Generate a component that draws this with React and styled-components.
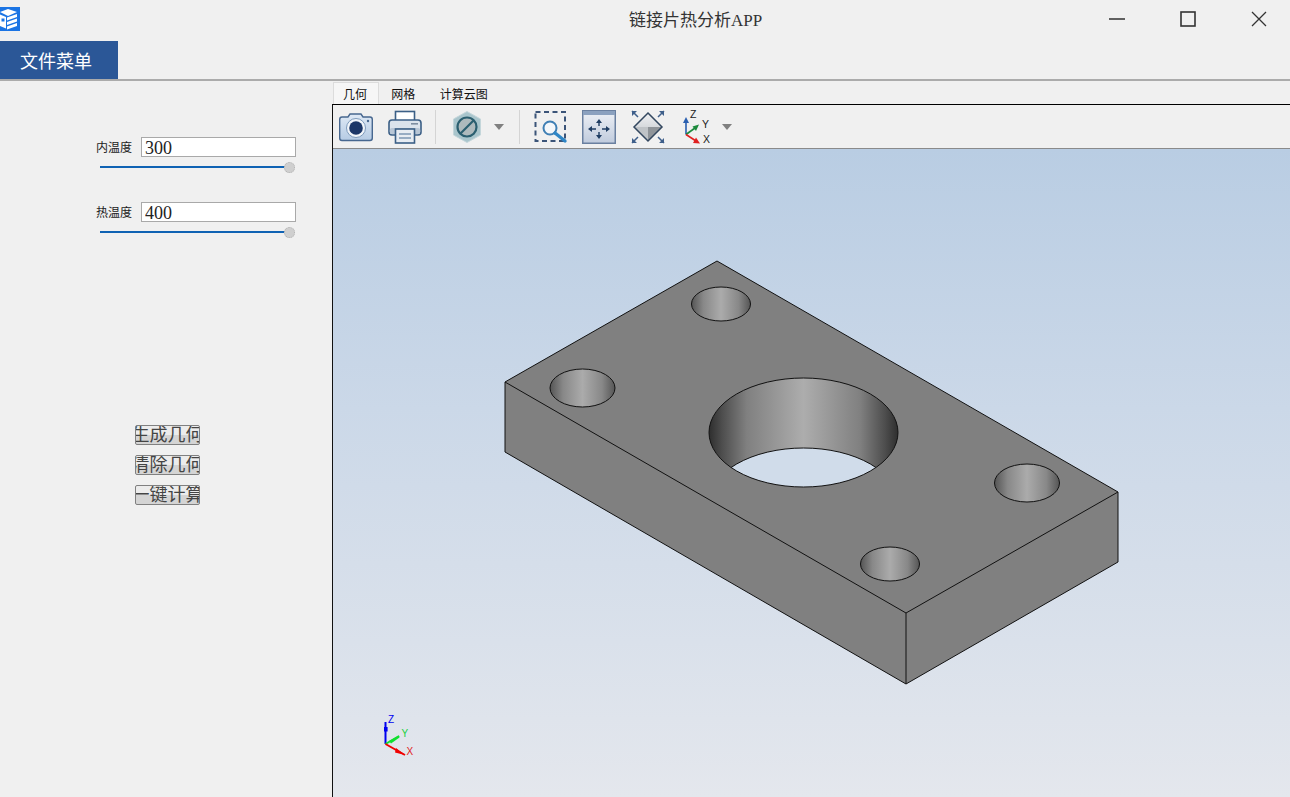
import React from "react";
import styled, { createGlobalStyle } from "styled-components";

const SERIF = `"Liberation Serif", "Noto Sans CJK SC", serif`;
const SANS = `"Liberation Sans", "Noto Sans CJK SC", sans-serif`;

const GlobalStyle = createGlobalStyle`
  html, body {
    margin: 0;
    height: 100%;
    overflow: hidden;
    background: #f0f0f0;
  }
  #root {
    height: 100%;
  }
`;

function AppIcon() {
  return (
    <svg width="20" height="24" viewBox="0 0 20 24">
      <rect width="20" height="24" fill="#1b74e4" />
      <path d="M0 5 L8 2 L17 5 L8 9 Z" fill="#fff" />
      <path d="M7 10.500 L17 7 V10 L7 13.500 Z M7 15 L17 11.500 V14.500 L7 18 Z M7 19.500 L17 16 V19 L7 22.500 Z" fill="#fff" />
      <path d="M0 7.500 L6 10 V21.500 L0 19 Z" fill="#fff" />
      <rect x="1.500" y="11.500" width="3" height="3" fill="#1b74e4" />
    </svg>
  );
}

function CameraIcon() {
  return (
    <svg width="34" height="30" viewBox="0 0 34 30">
      <defs>
        <linearGradient id="camBody" x1="0" y1="0" x2="0" y2="1">
          <stop offset="0" stopColor="#dfe9f5" />
          <stop offset="1" stopColor="#b5cbe4" />
        </linearGradient>
      </defs>
      <path
        d="M3 5 H9 L11 2 H22 L24 5 H31 Q33.300 5 33.300 7.500 V26 Q33.300 28.500 31 28.500 H3 Q0.700 28.500 0.700 26 V7.500 Q0.700 5 3 5 Z"
        fill="url(#camBody)"
        stroke="#47678f"
        strokeWidth="1.400"
      />
      <circle cx="17" cy="16" r="9.500" fill="#f1f5fa" stroke="#7d9abb" />
      <circle cx="17" cy="16" r="6.800" fill="#1c3768" />
      <circle cx="29" cy="9" r="1.200" fill="#47678f" />
    </svg>
  );
}

function PrinterIcon() {
  return (
    <svg width="34" height="34" viewBox="0 0 34 34">
      <rect x="7.500" y="1.500" width="19" height="10" fill="#fff" stroke="#3b5f86" strokeWidth="1.600" />
      <rect x="1" y="10" width="32" height="15" rx="3" fill="#dbe3ec" stroke="#3b5f86" strokeWidth="1.600" />
      <rect x="1.800" y="18" width="30.400" height="6" rx="2" fill="#b8c6d6" />
      <rect x="23" y="13" width="7" height="1.600" fill="#7d8da0" />
      <rect x="7.500" y="19" width="19" height="14" fill="#e7ecf2" stroke="#3b5f86" strokeWidth="1.600" />
      <path d="M11 24 H23 M11 28 H23" stroke="#7d97b4" strokeWidth="1.500" />
    </svg>
  );
}

function HexIcon() {
  return (
    <svg width="30" height="32" viewBox="0 0 30 32">
      <path d="M14 0.500 L27.500 8 V24 L14 31.500 L0.500 24 V8 Z" fill="#a9c5cc" stroke="#c4d6da" />
      <circle cx="14" cy="16" r="9.500" fill="#aebabd" stroke="#2b5f70" strokeWidth="2.200" />
      <path d="M7.500 22.500 L20.500 9.500" stroke="#2b5f70" strokeWidth="2.200" />
    </svg>
  );
}

function ZoomBoxIcon() {
  return (
    <svg width="34" height="34" viewBox="0 0 34 34">
      <rect x="1.500" y="2" width="29.500" height="29" fill="none" stroke="#3b5478" strokeWidth="2" strokeDasharray="5 3.500" />
      <circle cx="16" cy="18" r="6.500" fill="#f4f7fa" stroke="#3f7fb4" strokeWidth="2" />
      <path d="M21 23 L31 31" stroke="#2f86c6" strokeWidth="3.400" strokeLinecap="round" />
    </svg>
  );
}

function PanIcon() {
  return (
    <svg width="34" height="34" viewBox="0 0 34 34">
      <defs>
        <linearGradient id="panBg" x1="0" y1="0" x2="0" y2="1">
          <stop offset="0" stopColor="#eef1f6" />
          <stop offset="1" stopColor="#c0cbdd" />
        </linearGradient>
      </defs>
      <rect x="0.750" y="0.750" width="32.500" height="32.500" fill="url(#panBg)" stroke="#6a80a0" strokeWidth="1.500" />
      <rect x="1" y="1" width="32" height="4" fill="#8ba1bf" />
      <path d="M17 12 V16 M17 22 V26 M9 19 H14 M20 19 H25" stroke="#1f3d63" strokeWidth="1.400" />
      <path d="M17 9 L20 13 H14 Z M17 29 L20 25 H14 Z M6 19 L10 16 V22 Z M28 19 L24 16 V22 Z" fill="#1f3d63" />
    </svg>
  );
}

function FitIcon() {
  return (
    <svg width="34" height="34" viewBox="0 0 34 34">
      <defs>
        <linearGradient id="fitTop" x1="0" y1="0" x2="0" y2="1">
          <stop offset="0" stopColor="#f0f1f3" />
          <stop offset="1" stopColor="#d6d9dd" />
        </linearGradient>
      </defs>
      <path d="M17 3 L31 17 H3 Z" fill="url(#fitTop)" />
      <path d="M17 31 L31 17 L17 17 Z" fill="#8f9499" />
      <path d="M17 31 L3 17 L17 17 Z" fill="#bfc3c7" />
      <path d="M17 3 L31 17 L17 31 L3 17 Z" fill="none" stroke="#33475f" strokeWidth="1.500" />
      <path d="M1 1 L7 7 M33 1 L27 7 M1 33 L7 27 M33 33 L27 27" stroke="#3f5f8a" strokeWidth="1.500" />
      <path d="M1 1 H6 L1 6 Z M33 1 H28 L33 6 Z M1 33 H6 L1 28 Z M33 33 H28 L33 28 Z" fill="#3f5f8a" />
    </svg>
  );
}

function AxesIcon() {
  return (
    <svg width="30" height="36" viewBox="0 0 30 36">
      <path d="M3 25.500 V12" stroke="#2a5fb0" strokeWidth="1.600" />
      <path d="M3 8 L6 14 H0 Z" fill="#2a5fb0" />
      <path d="M3 25.500 L12 19" stroke="#1c8a3c" strokeWidth="1.600" />
      <path d="M16 15.500 L13 22 L9.500 17.500 Z" fill="#1c8a3c" />
      <path d="M3 25.500 L13 32" stroke="#e02020" strokeWidth="1.600" />
      <path d="M17 34.500 L10 34 L13 28.500 Z" fill="#e02020" />
      <AxisText x="7" y="8.500">Z</AxisText>
      <AxisText x="19" y="18.500">Y</AxisText>
      <AxisText x="20" y="33.500">X</AxisText>
    </svg>
  );
}

export default function App() {
  return (
    <Page>
      <GlobalStyle />
      <TitleBar>
        <AppIcon />
        <Title>链接片热分析APP</Title>
        <WindowControls>
          <WindowButton>
            <svg width="16" height="16" viewBox="0 0 16 16">
              <path d="M0 8 H16" stroke="#222" strokeWidth="1.400" />
            </svg>
          </WindowButton>
          <WindowButton>
            <svg width="16" height="16" viewBox="0 0 16 16">
              <rect x="1" y="1" width="14" height="14" fill="none" stroke="#333" strokeWidth="1.600" />
            </svg>
          </WindowButton>
          <WindowButton>
            <svg width="16" height="16" viewBox="0 0 16 16">
              <path d="M1 1 L15 15 M15 1 L1 15" stroke="#333" strokeWidth="1.300" />
            </svg>
          </WindowButton>
        </WindowControls>
      </TitleBar>

      <MenuBar>
        <MenuButton>文件菜单</MenuButton>
      </MenuBar>

      <Workspace>
        <SidePanel>
          <ParamGroup>
            <FieldRow>
              <FieldLabel>内温度</FieldLabel>
              <FieldInput defaultValue="300" readOnly />
            </FieldRow>
            <Slider>
              <SliderThumb />
            </Slider>
          </ParamGroup>
          <ParamGroup>
            <FieldRow>
              <FieldLabel>热温度</FieldLabel>
              <FieldInput defaultValue="400" readOnly />
            </FieldRow>
            <Slider>
              <SliderThumb />
            </Slider>
          </ParamGroup>
          <ActionList>
            <ActionButton>生成几何</ActionButton>
            <ActionButton>清除几何</ActionButton>
            <ActionButton>一键计算</ActionButton>
          </ActionList>
        </SidePanel>

        <ViewerPane>
          <TabBar>
            <Tab $active>几何</Tab>
            <Tab>网格</Tab>
            <Tab>计算云图</Tab>
          </TabBar>
          <ViewerBody>
            <Toolbar>
              <ToolIcon $left={6}><CameraIcon /></ToolIcon>
              <ToolIcon $left={15}><PrinterIcon /></ToolIcon>
              <ToolSeparator $left={13} />
              <ToolIcon $left={17}><HexIcon /></ToolIcon>
              <Caret $left={11} />
              <ToolSeparator $left={15} />
              <ToolIcon $left={14}><ZoomBoxIcon /></ToolIcon>
              <ToolIcon $left={14}><PanIcon /></ToolIcon>
              <ToolIcon $left={15}><FitIcon /></ToolIcon>
              <ToolIcon $left={18}><AxesIcon /></ToolIcon>
              <Caret $left={9} />
            </Toolbar>
            <Viewport>
              <Scene />
            </Viewport>
          </ViewerBody>
        </ViewerPane>
      </Workspace>
    </Page>
  );
}

function Scene() {
  return (
    <SceneSvg viewBox="333 149 957 648">
      <defs>
        <linearGradient id="bigHole" x1="0" y1="0" x2="1" y2="0">
          <stop offset="0" stopColor="#2e2e2e" />
          <stop offset="0.07" stopColor="#4e4e4e" />
          <stop offset="0.2" stopColor="#808080" />
          <stop offset="0.5" stopColor="#adadad" />
          <stop offset="0.8" stopColor="#808080" />
          <stop offset="0.93" stopColor="#4e4e4e" />
          <stop offset="1" stopColor="#2e2e2e" />
        </linearGradient>
        <linearGradient id="smallHole" x1="0" y1="0" x2="1" y2="0">
          <stop offset="0" stopColor="#555" />
          <stop offset="0.2" stopColor="#888" />
          <stop offset="0.5" stopColor="#ababab" />
          <stop offset="0.8" stopColor="#888" />
          <stop offset="1" stopColor="#555" />
        </linearGradient>
        <clipPath id="bigHoleClip">
          <ellipse cx="803.500" cy="432.500" rx="94.500" ry="54.500" />
        </clipPath>
      </defs>

      <path
        d="M717 261 L1118 492 V562 L906 684 L505 452 V382 Z"
        fill="#808080"
        stroke="#111"
        strokeLinejoin="round"
      />
      <path d="M505 382 L906 613 L1118 492 M906 613 V684" fill="none" stroke="#111" />

      <ellipse cx="803.500" cy="432.500" rx="94.500" ry="54.500" fill="url(#bigHole)" />
      <g clipPath="url(#bigHoleClip)">
        <ellipse cx="803.500" cy="502.500" rx="94.500" ry="54.500" fill="#d0dcea" stroke="#111" />
      </g>
      <ellipse cx="803.500" cy="432.500" rx="94.500" ry="54.500" fill="none" stroke="#111" />

      <ellipse cx="721" cy="304" rx="29.500" ry="17" fill="url(#smallHole)" stroke="#111" />
      <ellipse cx="582.500" cy="388" rx="32.500" ry="19" fill="url(#smallHole)" stroke="#111" />
      <ellipse cx="1027" cy="483" rx="32.500" ry="19" fill="url(#smallHole)" stroke="#111" />
      <ellipse cx="890" cy="564" rx="29.500" ry="17" fill="url(#smallHole)" stroke="#111" />

      <path d="M385.500 744 V722" stroke="#0000f0" strokeWidth="2" />
      <rect x="384" y="727" width="3.600" height="4.500" fill="#0000f0" />
      <path d="M385.500 744 L399 736" stroke="#10e030" strokeWidth="2" />
      <path d="M389 741 L399 735.500 L399.500 737.500 L391 743.500 Z" fill="#10e030" />
      <path d="M385.500 744 L405 755" stroke="#f00000" strokeWidth="2" />
      <path d="M396 748 L405 755 L395 752.500 Z" fill="#f00000" />
      <MiniAxisText x="388" y="723" fill="#0000f0">Z</MiniAxisText>
      <MiniAxisText x="401.500" y="737" fill="#20d040">Y</MiniAxisText>
      <MiniAxisText x="406.500" y="755" fill="#e02020">X</MiniAxisText>
    </SceneSvg>
  );
}

const Page = styled.div`
  display: flex;
  flex-direction: column;
  height: 100%;
  background: #f0f0f0;
`;

const TitleBar = styled.div`
  display: flex;
  align-items: center;
  height: 41px;
  flex: none;
  padding-bottom: 3px;
  box-sizing: border-box;
`;

const Title = styled.div`
  margin-left: 609px;
  margin-bottom: 1px;
  font-family: ${SERIF};
  font-size: 17px;
  color: #333;
  white-space: nowrap;
`;

const WindowControls = styled.div`
  display: flex;
  margin-left: auto;
  margin-right: -4px;
`;

const WindowButton = styled.div`
  display: flex;
  align-items: center;
  justify-content: center;
  width: 71px;
  height: 36px;
`;

const MenuBar = styled.div`
  height: 38px;
  flex: none;
`;

const MenuButton = styled.div`
  display: flex;
  align-items: center;
  width: 118px;
  height: 38px;
  padding-left: 20px;
  box-sizing: border-box;
  background: #2b5797;
  color: #fff;
  font-family: ${SERIF};
  font-size: 18px;
`;

const Workspace = styled.div`
  flex: 1;
  display: flex;
  min-height: 0;
  border-top: 2px solid #ababab;
`;

const SidePanel = styled.div`
  width: 332px;
  flex: none;
  padding-top: 56px;
  box-sizing: border-box;
`;

const ParamGroup = styled.div`
  margin-left: 96px;
  width: 200px;
  height: 65px;
`;

const FieldRow = styled.div`
  display: flex;
  align-items: center;
  height: 20px;
`;

const FieldLabel = styled.label`
  width: 36px;
  margin-right: 9px;
  font-family: ${SERIF};
  font-size: 12px;
  color: #222;
  white-space: nowrap;
`;

const FieldInput = styled.input`
  width: 155px;
  height: 20px;
  padding: 2px 0 0 3px;
  box-sizing: border-box;
  border: 1px solid #a9a9a9;
  border-radius: 0;
  outline: none;
  background: #fff;
  font-family: ${SERIF};
  font-size: 18px;
  color: #222;
`;

const Slider = styled.div`
  position: relative;
  height: 2px;
  width: 190px;
  margin: 9px 0 0 4px;
  background: #0f62b3;
`;

const SliderThumb = styled.span`
  position: absolute;
  right: -5px;
  top: -4.500px;
  width: 11px;
  height: 11px;
  box-sizing: border-box;
  border: 1px dotted #b0b0b0;
  border-radius: 50%;
  background: #cfcfcf;
`;

const ActionList = styled.div`
  display: flex;
  flex-direction: column;
  align-items: center;
  gap: 10px;
  margin-top: 158px;
  margin-left: 3px;
`;

const ActionButton = styled.button`
  width: 65px;
  height: 20px;
  padding: 0;
  box-sizing: border-box;
  display: flex;
  align-items: center;
  justify-content: center;
  overflow: hidden;
  border: 1px solid #808080;
  border-radius: 2px;
  background: linear-gradient(#ececec 50%, #d4d4d4 50%);
  font-family: ${SERIF};
  font-size: 18px;
  line-height: 18px;
  color: #444;
  white-space: nowrap;
`;

const ViewerPane = styled.div`
  flex: 1;
  min-width: 0;
  display: flex;
  flex-direction: column;
`;

const TabBar = styled.div`
  display: flex;
  height: 23px;
  flex: none;
  padding-left: 1px;
  box-sizing: border-box;
  align-items: flex-end;
`;

const Tab = styled.div`
  height: 22px;
  line-height: 24px;
  box-sizing: border-box;
  padding: 0 ${(p) => (p.$active ? "9px" : "11.25px")};
  width: ${(p) => (p.$active ? "46px" : "auto")};
  border: 1px solid ${(p) => (p.$active ? "#dcdcdc" : "transparent")};
  border-bottom: none;
  background: ${(p) => (p.$active ? "#f6f6f6" : "transparent")};
  font-family: ${SANS};
  font-size: 12px;
  color: #111;
  white-space: nowrap;
`;

const ViewerBody = styled.div`
  flex: 1;
  min-height: 0;
  display: flex;
  flex-direction: column;
  border-top: 1px solid #000;
  border-left: 1px solid #111;
`;

const Toolbar = styled.div`
  display: flex;
  align-items: center;
  height: 44px;
  flex: none;
  box-sizing: border-box;
  border-bottom: 1px solid #8a8a8a;
  background: #f0f0f0;
`;

const ToolIcon = styled.div`
  display: flex;
  margin-left: ${(p) => p.$left}px;
`;

const ToolSeparator = styled.div`
  width: 1px;
  height: 34px;
  margin-left: ${(p) => p.$left}px;
  background: #d4d4d4;
`;

const Caret = styled.div`
  width: 0;
  height: 0;
  margin-left: ${(p) => p.$left}px;
  border-left: 5.5px solid transparent;
  border-right: 5.5px solid transparent;
  border-top: 6px solid #808080;
`;

const Viewport = styled.div`
  flex: 1;
  min-height: 0;
  background: linear-gradient(#b9cde3, #cbd8e8 40%, #e4e7ed);
`;

const SceneSvg = styled.svg`
  display: block;
  width: 100%;
  height: 100%;
`;

const AxisText = styled.text`
  font-family: ${SANS};
  font-size: 10.5px;
  fill: #222;
`;

const MiniAxisText = styled.text`
  font-family: ${SANS};
  font-size: 10px;
`;
